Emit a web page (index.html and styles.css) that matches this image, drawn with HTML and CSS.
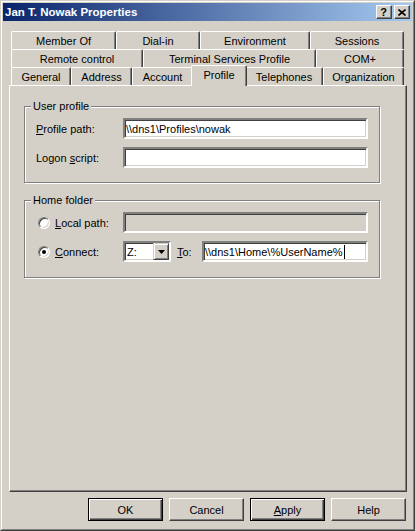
FILE: index.html
```html
<!DOCTYPE html>
<html>
<head>
<meta charset="utf-8">
<title>Jan T. Nowak Properties</title>
<link rel="stylesheet" href="styles.css">
</head>
<body>
<div class="window">
  <div class="frame">
    <div class="titlebar">
      <span class="title">Jan T. Nowak Properties</span>
      <div class="tbtns">
        <span class="tbtn help">?</span>
        <span class="tbtn close"><svg width="8" height="7" viewBox="0 0 8 7"><path d="M0.5 0.5L7.5 6.5M7.5 0.5L0.5 6.5" stroke="#000" stroke-width="1.6" fill="none"/></svg></span>
      </div>
    </div>
    <div class="client">
      <div class="tabs">
        <div class="tabrow">
          <div class="tab t-member">Member Of</div>
          <div class="tab t-dial">Dial-in</div>
          <div class="tab t-env">Environment</div>
          <div class="tab t-sess">Sessions</div>
        </div>
        <div class="tabrow">
          <div class="tab t-remote">Remote control</div>
          <div class="tab t-tsp">Terminal Services Profile</div>
          <div class="tab t-com">COM+</div>
        </div>
        <div class="tabrow">
          <div class="tab t-gen">General</div>
          <div class="tab t-addr">Address</div>
          <div class="tab t-acct">Account</div>
          <div class="tab sel t-prof">Profile</div>
          <div class="tab t-tel">Telephones</div>
          <div class="tab t-org">Organization</div>
        </div>
      </div>
      <div class="panel">
        <fieldset class="group g1">
          <legend>User profile</legend>
          <div class="row r1">
            <span class="lbl"><u>P</u>rofile path:</span>
            <div class="edit w-full">\\dns1\Profiles\nowak</div>
          </div>
          <div class="row r1">
            <span class="lbl">Logon <u>s</u>cript:</span>
            <div class="edit w-full"></div>
          </div>
        </fieldset>
        <fieldset class="group g2">
          <legend>Home folder</legend>
          <div class="row r2">
            <span class="radio"></span>
            <span class="lbl2"><u>L</u>ocal path:</span>
            <div class="edit dis w-full"></div>
          </div>
          <div class="row r2">
            <span class="radio on"></span>
            <span class="lbl2"><u>C</u>onnect:</span>
            <div class="combo">
              <span class="val">Z:</span>
              <span class="dd"><svg width="7" height="4" viewBox="0 0 7 4"><polygon points="0,0 7,0 3.5,4" fill="#000"/></svg></span>
            </div>
            <span class="to"><u>T</u>o:</span>
            <div class="edit w-to">\\dns1\Home\%UserName%<span class="caret"></span></div>
          </div>
        </fieldset>
      </div>
      <div class="buttons">
        <div class="btn def">OK</div>
        <div class="btn">Cancel</div>
        <div class="btn def"><span><u>A</u>pply</span></div>
        <div class="btn">Help</div>
      </div>
    </div>
  </div>
</div>
</body>
</html>
```

FILE: styles.css
```css
* { box-sizing: border-box; }

body {
  margin: 0;
  background: #d4d0c8;
  font-family: "Liberation Sans", Arial, sans-serif;
  font-size: 11px;
  color: #000;
}

u { text-decoration: underline; text-underline-offset: 1px; }

.window {
  width: 415px;
  height: 531px;
  display: flex;
  border: 1px solid;
  border-color: #d4d0c8 #404040 #404040 #d4d0c8;
  background: #d4d0c8;
}

.frame {
  flex: 1;
  display: flex;
  flex-direction: column;
  border: 1px solid;
  border-color: #fff #808080 #808080 #fff;
  padding: 1px;
}

.titlebar {
  flex: none;
  height: 18px;
  display: flex;
  align-items: center;
  justify-content: space-between;
  padding: 0 2px 0 2px;
  background: linear-gradient(to right, #0a246a, #a6caf0);
}

.title {
  color: #fff;
  font-weight: bold;
  font-size: 11.5px;
  white-space: nowrap;
}

.tbtns { display: flex; gap: 2px; }

.tbtn {
  width: 16px;
  height: 14px;
  background: #d4d0c8;
  border: 1px solid;
  border-color: #fff #404040 #404040 #fff;
  box-shadow: inset -1px -1px #808080;
  display: flex;
  align-items: center;
  justify-content: center;
  font-weight: bold;
  font-size: 11px;
  line-height: 11px;
  padding-right: 1px;
}

.client {
  flex: 1;
  display: flex;
  flex-direction: column;
  padding: 10px 5px 7px 6px;
}

.tabs {
  flex: none;
  height: 54px;
  padding-left: 2px;
  display: flex;
  flex-direction: column;
}

.tabrow {
  display: flex;
  align-items: flex-end;
  height: 18px;
}

.tab {
  flex: none;
  height: 18px;
  border-left: 1px solid #fff;
  border-top: 1px solid #fff;
  border-right: 1px solid #404040;
  box-shadow: inset -1px 0 #808080;
  border-radius: 2px 2px 0 0;
  display: flex;
  align-items: center;
  justify-content: center;
  white-space: nowrap;
  background: #d4d0c8;
}

.tab.sel {
  height: 21px;
  margin: -2px -2px -1px -2px;
  position: relative;
  z-index: 1;
  padding-bottom: 3px;
}

.t-member { width: 105px; }
.t-dial { width: 84px; }
.t-env { width: 110px; }
.t-sess { width: 94px; }
.t-remote { width: 132px; }
.t-tsp { width: 173px; }
.t-com { width: 88px; }
.t-gen { width: 60px; }
.t-addr { width: 61px; }
.t-acct { width: 61px; }
.t-prof { width: 56px; }
.t-tel { width: 78px; }
.t-org { width: 81px; }

.panel {
  flex: 1;
  border: 1px solid;
  border-color: #fff #404040 #404040 #fff;
  box-shadow: inset -1px -1px #808080;
  padding: 14px 0 0 14px;
}

.group {
  margin: 0;
  width: 356px;
  min-width: 0;
  border: 1px solid #808080;
  box-shadow: inset 1px 1px #fff, 1px 1px #fff;
  padding: 5px 0 14px 0;
}

.group legend {
  margin-left: 6px;
  padding: 0 2px;
  line-height: 13px;
  background: #d4d0c8;
}

.g2 { margin-top: 11px; padding-bottom: 15px; }

.row {
  display: flex;
  align-items: center;
  height: 21px;
}

.row + .row { margin-top: 8px; }

.r1 { padding-left: 11px; }
.r2 { padding-left: 13px; }

.lbl { width: 87px; flex: none; white-space: nowrap; }
.lbl2 { width: 68px; flex: none; white-space: nowrap; }

.edit {
  flex: none;
  height: 21px;
  border: 2px solid;
  border-color: #808080 #fff #fff #808080;
  box-shadow: inset 1px 1px #404040, inset -1px -1px #d4d0c8;
  background: #fff;
  padding: 0 1px;
  display: flex;
  align-items: center;
  white-space: nowrap;
  overflow: hidden;
}

.edit.dis { background: #d4d0c8; }
.w-full { width: 245px; }
.w-to { width: 166px; }

.caret {
  display: inline-block;
  width: 1px;
  height: 14px;
  background: #000;
  margin-left: 1px;
}

.radio {
  flex: none;
  width: 12px;
  height: 12px;
  border-radius: 50%;
  border: 1px solid;
  border-color: #808080 #fff #fff #808080;
  box-shadow: inset 1px 1px #404040, inset -1px -1px #d4d0c8;
  background: #fff;
  margin-right: 5px;
  display: flex;
  align-items: center;
  justify-content: center;
}

.radio.on::after {
  content: "";
  width: 4px;
  height: 4px;
  border-radius: 50%;
  background: #000;
}

.combo {
  flex: none;
  width: 48px;
  height: 21px;
  border: 2px solid;
  border-color: #808080 #fff #fff #808080;
  box-shadow: inset 1px 1px #404040, inset -1px -1px #d4d0c8;
  background: #fff;
  display: flex;
  align-items: center;
  margin-right: 6px;
}

.combo .val { flex: 1; padding-left: 2px; }

.combo .dd {
  flex: none;
  width: 16px;
  height: 17px;
  border: 1px solid;
  border-color: #d4d0c8 #404040 #404040 #d4d0c8;
  box-shadow: inset 1px 1px #fff, inset -1px -1px #808080;
  background: #d4d0c8;
  display: flex;
  align-items: center;
  justify-content: center;
}

.to { width: 25px; flex: none; }

.buttons {
  flex: none;
  display: flex;
  justify-content: flex-end;
  gap: 6px;
  margin-top: 6px;
  margin-right: 1px;
  height: 23px;
}

.btn {
  width: 75px;
  height: 23px;
  border: 1px solid;
  border-color: #fff #404040 #404040 #fff;
  box-shadow: inset -1px -1px #808080;
  display: flex;
  align-items: center;
  justify-content: center;
}

.btn.def {
  border-color: #000;
  box-shadow: inset 1px 1px #fff, inset -1px -1px #404040, inset -2px -2px #808080;
}
```
